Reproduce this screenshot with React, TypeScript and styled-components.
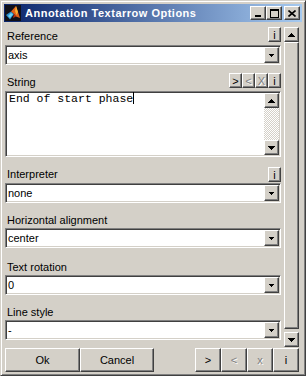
import React from "react";
import styled, { createGlobalStyle, css } from "styled-components";

const GlobalStyle = createGlobalStyle`
  html, body {
    margin: 0;
    padding: 0;
    background: #d4d0c8;
  }
  body {
    font-family: "Liberation Sans", Arial, sans-serif;
    font-size: 11px;
    color: #000;
  }
`;

const raised = css`
  box-sizing: border-box;
  border: 1px solid;
  border-color: #fff #404040 #404040 #fff;
  box-shadow: inset -1px -1px #808080, inset 1px 1px #d4d0c8;
  background: #d4d0c8;
`;

const sunken = css`
  box-sizing: border-box;
  border: 1px solid;
  border-color: #808080 #fff #fff #808080;
  box-shadow: inset 1px 1px #404040, inset -1px -1px #d4d0c8;
`;

function Arrow({ dir, small }: { dir: "up" | "down"; small?: boolean }) {
  const w = small ? 5 : 7;
  const h = small ? 3 : 4;
  const pts = dir === "down" ? `0,0 ${w},0 ${w / 2},${h}` : `0,${h} ${w},${h} ${w / 2},0`;
  return (
    <svg width={w} height={h} viewBox={`0 0 ${w} ${h}`} shapeRendering="crispEdges">
      <polygon points={pts} fill="#000" />
    </svg>
  );
}

function MatlabIcon() {
  return (
    <IconBox width="16" height="16" viewBox="0 0 16 16">
      <rect width="16" height="16" fill="#101018" />
      <polygon points="1,10 6,6.5 9,9 5,14.5" fill="#2c8fd0" />
      <polygon points="3,11 6,8 8,9.5 5,13" fill="#6fd3f0" />
      <polygon points="6,6.5 11,1 15,13 11,11.5 9,9" fill="#e0601a" />
      <polygon points="11,1 13,7 11.5,10 10,6" fill="#f8b030" />
      <polygon points="9,9 11,11.5 8,13" fill="#b83010" />
    </IconBox>
  );
}

export default function App() {
  return (
    <>
      <GlobalStyle />
      <Window>
        <TitleBar>
          <MatlabIcon />
          <TitleText>Annotation Textarrow Options</TitleText>
          <CaptionButtons>
            <CaptionButton>
              <svg width="8" height="8" viewBox="0 0 8 8" shapeRendering="crispEdges">
                <rect x="1" y="6" width="6" height="2" fill="#000" />
              </svg>
            </CaptionButton>
            <CaptionButton>
              <svg width="9" height="9" viewBox="0 0 9 9" shapeRendering="crispEdges">
                <rect x="0.5" y="0.5" width="8" height="8" fill="none" stroke="#000" />
                <rect x="0" y="1" width="9" height="1" fill="#000" />
              </svg>
            </CaptionButton>
            <CaptionButton $gap>
              <svg width="8" height="7" viewBox="0 0 8 7">
                <path d="M0.5 0.5 L7.5 6.5 M7.5 0.5 L0.5 6.5" stroke="#000" strokeWidth="1.6" />
              </svg>
            </CaptionButton>
          </CaptionButtons>
        </TitleBar>

        <Client>
          <Main>
            <Form>
              <Section>
                <HeaderRow>
                  <Label>Reference</Label>
                  <SmallButton>i</SmallButton>
                </HeaderRow>
                <PopupMenu value="axis" gap={3} />
              </Section>

              <Section $mt={8}>
                <HeaderRow>
                  <Label>String</Label>
                  <ButtonGroup>
                    <SmallButton>&gt;</SmallButton>
                    <SmallButton $disabled>&lt;</SmallButton>
                    <SmallButton $disabled>X</SmallButton>
                    <SmallButton>i</SmallButton>
                  </ButtonGroup>
                </HeaderRow>
                <TextArea>
                  <TextBody>
                    End of start phase<Caret />
                  </TextBody>
                  <InnerScroll>
                    <ScrollButton>
                      <Arrow dir="up" />
                    </ScrollButton>
                    <DitherTrack />
                    <ScrollButton>
                      <Arrow dir="down" />
                    </ScrollButton>
                  </InnerScroll>
                </TextArea>
              </Section>

              <Section $mt={10}>
                <HeaderRow>
                  <Label $lift={2}>Interpreter</Label>
                  <SmallButton>i</SmallButton>
                </HeaderRow>
                <PopupMenu value="none" gap={1} />
              </Section>

              <Section $mt={11}>
                <Label>Horizontal alignment</Label>
                <PopupMenu value="center" gap={2} />
              </Section>

              <Section $mt={13}>
                <Label>Text rotation</Label>
                <PopupMenu value="0" gap={2} />
              </Section>

              <Section $mt={11}>
                <Label>Line style</Label>
                <PopupMenu value="-" gap={2} />
              </Section>
            </Form>

            <VScroll>
              <ScrollButton>
                <Arrow dir="up" />
              </ScrollButton>
              <Thumb />
              <ScrollButton>
                <Arrow dir="down" />
              </ScrollButton>
            </VScroll>
          </Main>

          <Footer>
            <PushButton $w={75}>Ok</PushButton>
            <PushButton $w={74}>Cancel</PushButton>
            <Spacer />
            <PushButton $w={26}>&gt;</PushButton>
            <PushButton $w={26} $disabled>
              &lt;
            </PushButton>
            <PushButton $w={26} $disabled>
              x
            </PushButton>
            <PushButton $w={26}>i</PushButton>
          </Footer>
        </Client>
      </Window>
    </>
  );
}

function PopupMenu({ value, gap }: { value: string; gap: number }) {
  return (
    <ComboBox $mt={gap}>
      <ComboText>{value}</ComboText>
      <DropButton>
        <Arrow dir="down" small />
      </DropButton>
    </ComboBox>
  );
}

const Window = styled.div`
  width: 306px;
  height: 376px;
  box-sizing: border-box;
  border: 1px solid;
  border-color: #d4d0c8 #404040 #404040 #d4d0c8;
  box-shadow: inset 1px 1px #fff, inset -1px -1px #808080;
  padding: 3px;
  display: flex;
  flex-direction: column;
  background: #d4d0c8;
`;

const TitleBar = styled.div`
  height: 18px;
  display: flex;
  align-items: center;
  padding: 0 2px 0 1px;
  background: linear-gradient(to right, #0a246a, #a6caf0);
`;

const IconBox = styled.svg`
  flex: none;
  margin-right: 4px;
`;

const TitleText = styled.div`
  flex: 1;
  color: #fff;
  font-weight: bold;
  font-size: 11px;
  letter-spacing: 0.5px;
  white-space: nowrap;
`;

const CaptionButtons = styled.div`
  display: flex;
  align-items: center;
`;

const CaptionButton = styled.div<{ $gap?: boolean }>`
  ${raised};
  width: 16px;
  height: 14px;
  margin-left: ${(p) => (p.$gap ? "2px" : "0")};
  display: flex;
  align-items: center;
  justify-content: center;
`;

const Client = styled.div`
  flex: 1;
  display: flex;
  flex-direction: column;
  padding: 5px 3px 0 1px;
`;

const Main = styled.div`
  display: flex;
  height: 320px;
`;

const Form = styled.div`
  width: 276px;
  display: flex;
  flex-direction: column;
`;

const Section = styled.div<{ $mt?: number }>`
  display: flex;
  flex-direction: column;
  margin-top: ${(p) => p.$mt ?? 0}px;
`;

const HeaderRow = styled.div`
  height: 15px;
  display: flex;
  align-items: flex-end;
  justify-content: space-between;
`;

const Label = styled.div<{ $lift?: number }>`
  line-height: 12px;
  height: 12px;
  padding-left: 2px;
  margin-bottom: ${(p) => p.$lift ?? 0}px;
  white-space: nowrap;
`;

const ButtonGroup = styled.div`
  display: flex;
  align-self: stretch;
`;

const disabledText = css`
  color: #808080;
  text-shadow: 1px 1px 0 #fff;
`;

const SmallButton = styled.div<{ $disabled?: boolean }>`
  ${raised};
  width: 13px;
  height: 15px;
  display: flex;
  align-items: center;
  justify-content: center;
  font-size: 11px;
  ${(p) => p.$disabled && disabledText};
`;

const ComboBox = styled.div<{ $mt: number }>`
  ${sunken};
  background: #fff;
  height: 20px;
  margin-top: ${(p) => p.$mt}px;
  padding: 1px;
  display: flex;
  align-items: stretch;
`;

const ComboText = styled.div`
  flex: 1;
  line-height: 16px;
  padding-left: 1px;
  white-space: nowrap;
`;

const DropButton = styled.div`
  ${raised};
  width: 15px;
  display: flex;
  align-items: center;
  justify-content: center;
`;

const TextArea = styled.div`
  ${sunken};
  background: #fff;
  height: 66px;
  margin-top: 3px;
  padding: 1px;
  display: flex;
`;

const TextBody = styled.div`
  flex: 1;
  font-family: "Liberation Mono", "Courier New", monospace;
  font-size: 11.5px;
  line-height: 12px;
  padding: 0 2px;
  margin-top: -1px;
  white-space: pre;
`;

const Caret = styled.span`
  display: inline-block;
  width: 1px;
  height: 12px;
  background: #000;
  vertical-align: -2px;
`;

const InnerScroll = styled.div`
  width: 15px;
  display: flex;
  flex-direction: column;
`;

const ScrollButton = styled.div`
  ${raised};
  height: 15px;
  flex: none;
  display: flex;
  align-items: center;
  justify-content: center;
`;

const DitherTrack = styled.div`
  flex: 1;
  background: repeating-conic-gradient(#d4d0c8 0% 25%, #fff 0% 50%) 0 0 / 2px 2px;
`;

const VScroll = styled.div`
  width: 15px;
  margin-left: 3px;
  display: flex;
  flex-direction: column;
`;

const Thumb = styled.div`
  ${raised};
  flex: 1;
  margin-bottom: 3px;
`;

const Footer = styled.div`
  margin-top: 1px;
  height: 24px;
  display: flex;
`;

const Spacer = styled.div`
  flex: 1;
`;

const PushButton = styled.div<{ $w: number; $disabled?: boolean }>`
  ${raised};
  width: ${(p) => p.$w}px;
  height: 24px;
  display: flex;
  align-items: center;
  justify-content: center;
  font-size: 11px;
  ${(p) => p.$disabled && disabledText};
`;
